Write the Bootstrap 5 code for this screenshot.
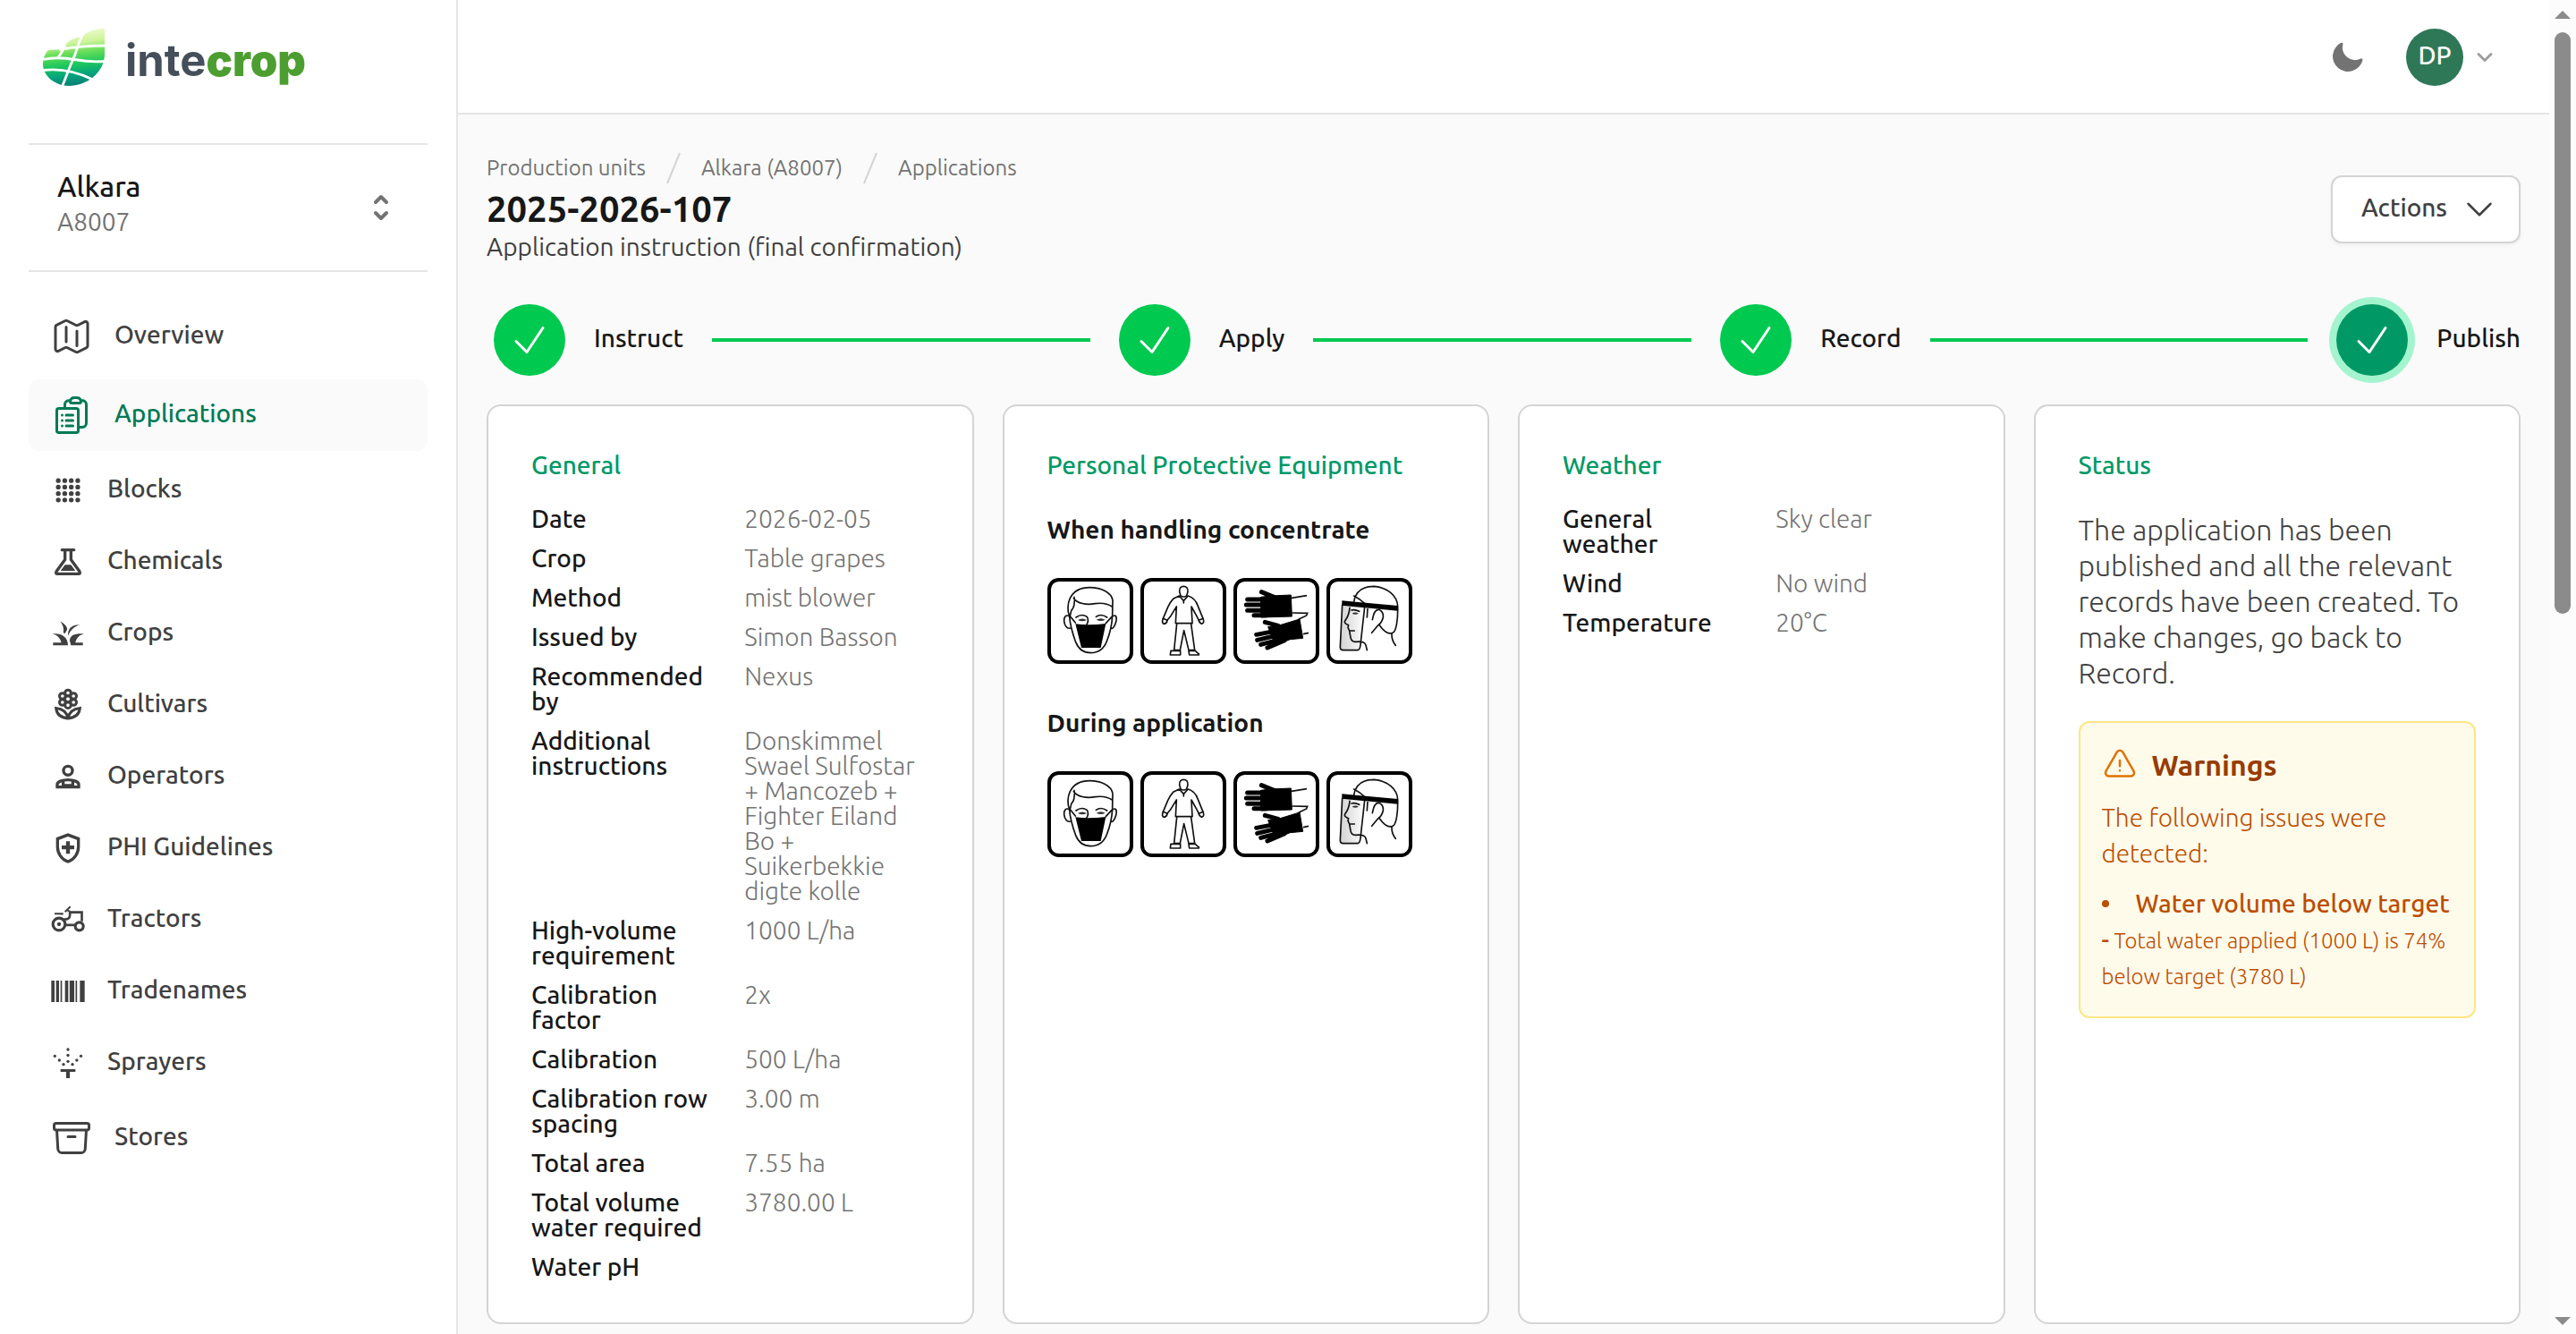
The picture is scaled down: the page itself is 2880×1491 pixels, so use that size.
<!DOCTYPE html>
<html lang="en">
<head>
<meta charset="utf-8">
<meta name="viewport" content="width=device-width, initial-scale=1">
<title>2025-2026-107 · intecrop</title>
<link href="https://cdn.jsdelivr.net/npm/bootstrap@5.3.0/dist/css/bootstrap.min.css" rel="stylesheet">
<style>
  :root { --ink: #171717; --body: #404040; --muted: #737373; --line: #e5e5e5; --edge: #d4d4d4; --green: #009966; --step: #00c950; }
  body { font-family: Ubuntu, "Open Sans", "Noto Sans", sans-serif; font-size: 28px; line-height: 40px; font-weight: 300; color: var(--body); background: #fafafa; }
  a { color: inherit; text-decoration: none; }
  svg { flex: none; display: block; }
  .ico { fill: none; stroke: currentColor; stroke-width: 1.5; stroke-linecap: round; stroke-linejoin: round; }
  .app-shell { height: 100vh; overflow: hidden; }

  .side-panel { flex: 0 0 512px; background: #fff; border-right: 2px solid var(--line); padding: 0 32px; }
  .brand-row { height: 160px; padding: 32px 16px; gap: 22px; }
  .brand-name { font: 700 49px/72px Inter, sans-serif; color: #454f5b; }
  .brand-name b { color: #4b9e2f; }
  .unit-picker { height: 144px; border: 0; border-top: 2px solid var(--line); border-bottom: 2px solid var(--line); background: none; padding: 0 32px; color: var(--muted); text-align: left; }
  .unit-name { font-size: 32px; font-weight: 500; color: var(--ink); line-height: 36px; }
  .unit-code { line-height: 36px; }
  .unit-text { padding-bottom: 8px; gap: 4px; }
  .side-nav { padding-top: 32px; gap: 8px; }
  .side-nav .nav-link { height: 72px; padding: 0 24px; gap: 24px; color: var(--body); font-weight: 500; border-radius: 12px; }
  .side-nav .nav-tall { height: 80px; }
  .side-nav .active { background: #fafafa; color: #007a55; }
  .side-nav span { padding-bottom: 4px; }

  .top-strip { height: 128px; background: #fff; border-bottom: 2px solid var(--line); padding: 2px 60px 0; }
  .plain-btn { border: 0; background: none; padding: 0; }
  .moon-btn { color: var(--muted); margin-right: 46px; }
  .user-btn { gap: 12px; color: #9f9f9f; }
  .user-disc { width: 64px; height: 64px; border-radius: 50%; background: #2e7858; color: #fff; font-weight: 500; font-size: 28px; line-height: 60px; }

  .page-pad { padding: 40px 32px 12px; }
  .head-text { padding-bottom: 8px; }
  .crumbs { font-size: 24px; font-weight: 400; line-height: 40px; color: var(--muted); gap: 16px; }
  .crumbs svg { color: var(--edge); }
  .page-title { font-size: 40px; line-height: 52px; font-weight: 700; color: var(--ink); }
  .page-sub { line-height: 32px; font-weight: 400; }
  .actions-btn { height: 76px; padding: 0 24px 0 32px; gap: 16px; line-height: 40px; background: #fff; border: 2px solid var(--edge); border-radius: 12px; color: var(--body); box-shadow: 0 2px 4px rgba(0,0,0,.05); }
  .actions-btn span { font-weight: 500; padding-bottom: 4px; }

  .stepper { height: 96px; margin: 32px 0 24px; padding-left: 8px; gap: 32px; }
  .step-item { gap: 32px; font-weight: 500; color: var(--ink); }
  .step-item span:last-child { padding-bottom: 4px; }
  .step-disc { width: 80px; height: 80px; border-radius: 50%; background: var(--step); color: #fff; }
  .step-now { background: var(--green); box-shadow: 0 0 0 8px #a4f4cf; }
  .step-bar { height: 4px; background: var(--step); }

  .panel-grid { display: grid; grid-template-columns: repeat(4, minmax(0, 1fr)); gap: 32px; }
  .panel { background: #fff; border: 2px solid var(--edge); border-radius: 16px; padding: 48px; }
  .panel h2 { font-size: 28px; line-height: 36px; font-weight: 500; color: var(--green); margin: 0 0 28px; }
  .facts { display: grid; grid-template-columns: 1fr 1fr; gap: 16px 32px; line-height: 28px; margin: 0; }
  .facts dt { font-weight: 500; color: var(--ink); }
  .facts dd { margin: 0; color: var(--muted); }
  .panel h3 { font-size: 28px; line-height: 44px; font-weight: 600; color: var(--ink); margin: 32px 0; }
  .signs { gap: 8px; margin-bottom: 44px; }
  .status-text { font-size: 32px; line-height: 40px; margin: 34px 0; }
  .warn-box { background: #fffbeb; border: 2px solid #fee685; border-radius: 12px; padding: 24px; color: #bb4d00; }
  .warn-head { font-size: 32px; font-weight: 600; color: #973c00; gap: 16px; margin-bottom: 16px; line-height: 46px; }
  .warn-head svg { color: #e17100; }
  .warn-title { font-weight: 500; gap: 30px; margin-top: 16px; }
  .bullet-dot { width: 8px; height: 8px; border-radius: 50%; background: currentColor; }
  .warn-note { font-size: 24px; }
  .warn-note span { font-size: 28px; font-weight: 500; }

  .scroll-rail { flex: 0 0 30px; background: #fcfcfc; padding: 12px 6px 10px; color: #8b8b8b; }
  .scroll-thumb { width: 18px; height: 650px; margin: 15px 0 auto; border-radius: 9px; background: #8b8b8b; }
</style>
<script src="https://cdn.jsdelivr.net/npm/bootstrap@5.3.0/dist/js/bootstrap.bundle.min.js"></script>
</head>
<body>

<svg width="0" height="0" class="position-absolute" aria-hidden="true">
  <defs>
    <linearGradient id="shieldFill" x1="0" x2="1"><stop offset="0" stop-color="#d2d2d2"/><stop offset="1" stop-color="#ffffff"/></linearGradient>
    <linearGradient id="leafFill" x1=".55" y1="0" x2=".68" y2="1">
      <stop offset="0" stop-color="#f0fad2"/><stop offset=".24" stop-color="#cdf59b"/><stop offset=".4" stop-color="#6cdf5a"/><stop offset=".6" stop-color="#1fc95c"/><stop offset=".78" stop-color="#06a67c"/><stop offset="1" stop-color="#057a74"/>
    </linearGradient>
  </defs>
  <symbol id="check" viewBox="0 0 24 24"><path d="m4.5 12.75 6 6 9-13.5"/></symbol>
  <symbol id="sign-mask" viewBox="0 0 288 288">
    <rect x="6" y="6" width="276" height="276" rx="32" fill="#fff" stroke="#000" stroke-width="12"/>
    <g fill="none" stroke="#111" stroke-width="5" stroke-linejoin="round" stroke-linecap="round">
      <path d="M74 128C66 110 68 85 76 68C90 40 115 32 142 32C180 32 215 48 219 75L218 124M88 68C100 85 130 92 160 86C190 82 205 88 217 96M90 64Q94 95 80 110L76 128"/>
      <path d="M74 128C62 122 55 130 56 145C58 160 66 172 76 168M218 128C230 122 234 130 230 148C226 162 218 172 214 168"/>
      <path d="M74 128C76 160 84 185 95 215C105 240 125 251 145 251C170 251 190 238 200 210C210 185 216 160 218 128M94 150L76 128M196 152L218 128"/>
      <path d="M96 132Q115 118 133 130Q140 142 132 156M163 130Q180 118 200 132"/>
    </g>
    <path d="M102 141Q117 132 132 141Q117 149 102 141ZM164 140Q179 131 194 140Q179 148 164 140Z" fill="#333"/>
    <path d="M94 154Q140 160 196 153L179 234H114Z"/>
  </symbol>
  <symbol id="sign-suit" viewBox="0 0 288 288">
    <rect x="6" y="6" width="276" height="276" rx="32" fill="#fff" stroke="#000" stroke-width="12"/>
    <g fill="none" stroke="#111" stroke-width="5" stroke-linejoin="round" stroke-linecap="round">
      <path d="M131 46C130 34 136 28 145 28S160 34 159 46L155 60Q145 66 135 60Z"/>
      <path d="M130 60L110 70Q100 80 92 98L76 136L90 142L100 130L121 96L118 152H174L171 96L190 130L196 142L210 136L192 92Q184 68 160 60L145 76Z"/>
      <path d="M76 136Q70 152 80 154Q90 152 90 142M210 136Q216 150 206 154Q196 150 196 142M122 154L113 242H133L146 176L162 242H182L170 154"/>
      <path d="M102 244H134V258H100ZM162 244H184Q190 252 196 254V258H164ZM145 76V84"/>
    </g>
  </symbol>
  <symbol id="sign-gloves" viewBox="0 0 288 288">
    <rect x="6" y="6" width="276" height="276" rx="32" fill="#fff" stroke="#000" stroke-width="12"/>
    <path d="M92 64L125 60L193 57L196 129L92 132ZM116 164L150 160L222 138L233 202L190 206L140 226Z" stroke="#000" stroke-width="3" stroke-linejoin="round"/>
    <g fill="none" stroke="#000" stroke-width="15" stroke-linecap="round">
      <path d="M47 72H110M43 90H110M47 109H110M69 125H110M94 47L136 64"/>
      <path d="M77 190L140 178M80 208L140 194M92 223L150 208M114 234L170 210M106 148L150 160"/>
    </g>
    <path d="M195 67L246 59M196 117L248 118L245 126L218 139M234 188L252 184" fill="none" stroke="#111" stroke-width="5"/>
  </symbol>
  <symbol id="sign-visor" viewBox="0 0 288 288">
    <rect x="6" y="6" width="276" height="276" rx="32" fill="#fff" stroke="#000" stroke-width="12"/>
    <path d="M53 90L46 232Q46 242 56 242H104Q112 242 114 225L128 98Z" fill="url(#shieldFill)"/>
    <g fill="none" stroke="#111" stroke-width="5" stroke-linejoin="round" stroke-linecap="round">
      <path d="M53 90L46 232Q46 242 56 242H104Q112 242 114 225L128 98"/>
      <path d="M92 80C98 38 130 28 160 28C205 32 238 60 239 95C240 140 234 180 222 184C205 192 190 176 176 156M92 60Q112 70 128 86"/>
      <path d="M78 100Q76 125 62 144Q58 152 74 158L72 166L77 177H94M77 177L81 200Q84 216 100 214Q128 211 132 225L136 242"/>
      <path d="M154 140Q160 105 175 106Q192 112 190 132Q186 150 172 160L152 184M138 104L136 132M219 186Q218 210 232 226M84 108Q95 104 110 112"/>
    </g>
    <path d="M86 119Q96 112 108 119Q96 125 86 119Z" fill="#333"/>
    <path d="M52 76L239 93V110L52 92Z"/>
  </symbol>
</svg>

<div class="app-shell d-flex">

  <aside class="side-panel">
    <a href="#" class="brand-row d-flex align-items-start">
      <svg width="70" height="64" viewBox="0 0 70 64" role="img" aria-label="Leaf">
        <path fill="url(#leafFill)" d="M69 0C58 0 48 4 43.500 9C34 10 28 14 24 19L22 23L6 24C3 27 0 33 0 40C0 53 14 64 29 64C48 64 69 50 69 28Z"/>
        <g fill="none" stroke="#fff" stroke-width="2.800"><path d="M18 23.500Q42 19 70 19M0 34.500Q16 31 35 34.500T70 36.500M0 46.500Q28 43 56 57M45 5L41 14Q36 30 30 43L21 66M25 18Q21 28 16 33"/></g>
      </svg>
      <span class="brand-name">inte<b>crop</b></span>
    </a>

    <button type="button" class="unit-picker w-100 d-flex align-items-center justify-content-between">
      <span class="unit-text d-flex flex-column"><span class="unit-name">Alkara</span><span class="unit-code">A8007</span></span>
      <svg width="40" height="40" viewBox="0 0 20 20" class="ico"><path stroke-width="2" d="M7 7l3-3 3 3M7 13l3 3 3-3"/></svg>
    </button>

    <nav class="side-nav nav flex-column" aria-label="Main">
      <a href="#" class="nav-link nav-tall d-flex align-items-center"><svg width="48" height="48" viewBox="0 0 24 24" class="ico"><path d="M9 6.75V15m6-6v8.250m.503 3.498 4.875-2.437c.381-.19.622-.58.622-1.006V4.820c0-.836-.88-1.380-1.628-1.006l-3.869 1.934c-.317.159-.69.159-1.006 0L9.503 3.252a1.125 1.125 0 0 0-1.006 0L3.622 5.689C3.240 5.880 3 6.270 3 6.695V19.180c0 .836.88 1.380 1.628 1.006l3.869-1.934c.317-.159.69-.159 1.006 0l4.994 2.497c.317.158.69.158 1.006 0Z"/></svg><span>Overview</span></a>
      <a href="#" class="nav-link nav-tall active d-flex align-items-center" aria-current="page"><svg width="48" height="48" viewBox="0 0 24 24" class="ico"><path d="M9 12h3.750M9 15h3.750M9 18h3.750m3 .75H18a2.250 2.250 0 0 0 2.250-2.250V6.108c0-1.135-.845-2.098-1.976-2.192a48.424 48.424 0 0 0-1.123-.08m-5.801 0c-.065.21-.1.433-.1.664 0 .414.336.75.75.75h4.500a.75.75 0 0 0 .75-.75 2.250 2.250 0 0 0-.1-.664m-5.800 0A2.251 2.251 0 0 1 13.500 2.250H15c1.012 0 1.867.668 2.150 1.586m-5.800 0c-.376.023-.75.05-1.124.08C9.095 4.010 8.250 4.973 8.250 6.108V8.250m0 0H4.875c-.621 0-1.125.504-1.125 1.125v11.250c0 .621.504 1.125 1.125 1.125h9.750c.621 0 1.125-.504 1.125-1.125V9.375c0-.621-.504-1.125-1.125-1.125H8.250ZM6.750 12h.008v.008H6.750V12Zm0 3h.008v.008H6.750V15Zm0 3h.008v.008H6.750V18Z"/></svg><span>Applications</span></a>
      <a href="#" class="nav-link d-flex align-items-center"><svg width="40" height="40" viewBox="0 0 24 24"><g fill="none" stroke="currentColor" stroke-width="3.200" stroke-linecap="round" stroke-dasharray="0 4.350"><path d="M5.500 5.500H19M5.500 9.850H19M5.500 14.200H19M5.500 18.500H19"/></g></svg><span>Blocks</span></a>
      <a href="#" class="nav-link d-flex align-items-center"><svg width="40" height="40" viewBox="0 0 24 24"><path fill="none" stroke="currentColor" stroke-width="2" stroke-linejoin="round" d="M10 4V10.500L4.200 18.500Q3.500 20 5 20H19Q20.500 20 19.800 18.500L14 10.500V4"/><path fill="currentColor" d="M8 3H16Q17 3 17 4T16 5H8Q7 5 7 4T8 3ZM7 18H17L14 14H10Z"/></svg><span>Chemicals</span></a>
      <a href="#" class="nav-link d-flex align-items-center"><svg width="40" height="40" viewBox="0 0 24 24" fill="currentColor"><path d="M1.600 12.200C7 11.500 12 14 12 19.900H2V18.200H7.500C7 15.500 4.800 13 1.600 12.200ZM22.800 12.200C17 11.800 13 13 13.200 17L14 19.900H22V18.200H17C17.500 15.500 19.500 13 22.800 12.200ZM6.800 4C9.500 5 12 8 11.400 9.500L10 12L8.900 11.500C9.300 8 8.500 6 6.800 4ZM20 6.200C15 6 11.800 8.500 12 13.600C14 9.500 16 7.500 20 6.200Z"/></svg><span>Crops</span></a>
      <a href="#" class="nav-link d-flex align-items-center"><svg width="40" height="40" viewBox="0 0 24 24" fill="none" stroke="currentColor" stroke-width="1.800"><circle cx="12" cy="8" r="2.100"/><circle cx="12" cy="3.900" r="2"/><circle cx="12" cy="12.100" r="2"/><circle cx="8.300" cy="6" r="2"/><circle cx="15.700" cy="6" r="2"/><circle cx="8.300" cy="10.200" r="2"/><circle cx="15.700" cy="10.200" r="2"/><path d="M4 14.100C8.500 14.600 11.300 17 12 20.900C7.500 20.500 4.400 18.500 4 14.100ZM20 14.100C15.500 14.600 12.700 17 12 20.900C16.500 20.500 19.600 18.500 20 14.100Z"/></svg><span>Cultivars</span></a>
      <a href="#" class="nav-link d-flex align-items-center"><svg width="40" height="40" viewBox="0 0 24 24" fill="none" stroke="currentColor" stroke-width="2"><circle cx="12" cy="8" r="3"/><path d="M4.800 19V17.200C4.800 15.500 8 14.200 12 14.200S19.200 15.500 19.200 17.200V19Z"/><path d="M8.800 14.500V19M15.200 14.500V19M8 18H16"/></svg><span>Operators</span></a>
      <a href="#" class="nav-link d-flex align-items-center"><svg width="40" height="40" viewBox="0 0 24 24" fill="currentColor"><path d="M12 22q-3.475-.875-5.738-3.988T4 11.100V5l8-3 8 3v6.100q0 3.800-2.263 6.912T12 22Zm0-2.100q2.600-.825 4.300-3.300t1.700-5.500V6.375l-6-2.250-6 2.250V11.100q0 3.025 1.700 5.500t4.300 3.300ZM10.700 7.300h2.600v2.900h2.900v2.600h-2.900v2.900h-2.600v-2.900H7.800v-2.600h2.900z" fill-rule="evenodd"/></svg><span>PHI Guidelines</span></a>
      <a href="#" class="nav-link d-flex align-items-center"><svg width="40" height="40" viewBox="0 0 24 24" fill="none" stroke="currentColor" stroke-width="1.900"><circle cx="6" cy="15" r="4.100"/><circle cx="6" cy="15" r="1.300" fill="currentColor" stroke="none"/><circle cx="19.600" cy="16.400" r="2.700"/><path d="M9 11.800Q13.300 12 13.300 9V7H21.300V13M10.500 15.500H16.800" stroke-width="1.600"/><path d="M3 7.900H8.800L7 8.200M10 6.700L13.600 3.200M11.600 5.200L13.600 7" stroke-width="1.200"/></svg><span>Tractors</span></a>
      <a href="#" class="nav-link d-flex align-items-center"><svg width="40" height="40" viewBox="0 0 24 24" fill="currentColor"><path d="M.8 4.800H3V19.200H.8ZM4 4.800H6V19.200H4ZM7 4.800H8V19.200H7ZM10 4.800H12.200V19.200H10ZM13.100 4.800H16.200V19.200H13.100ZM17.100 4.800H18.100V19.200H17.100ZM20 4.800H23.200V19.200H20Z"/></svg><span>Tradenames</span></a>
      <a href="#" class="nav-link d-flex align-items-center"><svg width="40" height="40" viewBox="0 0 24 24" fill="currentColor"><path d="M7 16.200H17V18H13.200V22.200H10.800V18H7Z"/><g><circle cx="12" cy="3" r="1"/><circle cx="12" cy="6.900" r="1"/><circle cx="12" cy="11" r="1"/><circle cx="3.200" cy="7.400" r="1"/><circle cx="6.200" cy="10.200" r="1"/><circle cx="9" cy="13" r="1"/><circle cx="20.700" cy="7.400" r="1"/><circle cx="17.900" cy="10.200" r="1"/><circle cx="15" cy="13" r="1"/></g></svg><span>Sprayers</span></a>
      <a href="#" class="nav-link nav-tall d-flex align-items-center"><svg width="48" height="48" viewBox="0 0 24 24" class="ico"><path d="m20.250 7.500-.625 10.632a2.250 2.250 0 0 1-2.247 2.118H6.622a2.250 2.250 0 0 1-2.247-2.118L3.750 7.500M10 11.250h4M3.375 7.500h17.250c.621 0 1.125-.504 1.125-1.125v-1.500c0-.621-.504-1.125-1.125-1.125H3.375c-.621 0-1.125.504-1.125 1.125v1.500c0 .621.504 1.125 1.125 1.125Z"/></svg><span>Stores</span></a>
    </nav>
  </aside>

  <div class="flex-fill overflow-hidden">
    <header class="top-strip d-flex align-items-center justify-content-end">
      <button type="button" class="plain-btn moon-btn" aria-label="Dark mode"><svg width="40" height="40" viewBox="0 0 20 20" fill="currentColor"><path fill-rule="evenodd" clip-rule="evenodd" d="M7.455 2.004a.75.75 0 0 1 .26.77 7 7 0 0 0 9.958 7.967.75.75 0 0 1 1.067.853A8.500 8.500 0 1 1 6.647 1.921a.75.75 0 0 1 .808.083Z"/></svg></button>
      <button type="button" class="plain-btn user-btn d-flex align-items-center"><span class="user-disc text-center">DP</span><svg width="24" height="24" viewBox="0 0 24 24" class="ico"><path stroke-width="3" d="m5 8.500 7 7 7-7"/></svg></button>
    </header>

    <main class="page-pad">
      <div class="d-flex align-items-center justify-content-between">
        <div class="head-text">
          <nav aria-label="Breadcrumb"><ol class="crumbs d-flex align-items-center list-unstyled mb-0">
            <li><a href="#">Production units</a></li>
            <li aria-hidden="true"><svg width="30" height="40" viewBox="0 0 30 40"><path d="M22 3L8 37" stroke="currentColor" stroke-width="2"/></svg></li>
            <li><a href="#">Alkara (A8007)</a></li>
            <li aria-hidden="true"><svg width="30" height="40" viewBox="0 0 30 40"><path d="M22 3L8 37" stroke="currentColor" stroke-width="2"/></svg></li>
            <li><a href="#">Applications</a></li>
          </ol></nav>
          <h1 class="page-title mb-0">2025-2026-107</h1>
          <p class="page-sub mb-0">Application instruction (final confirmation)</p>
        </div>
        <button type="button" class="actions-btn d-flex align-items-center"><span>Actions</span><svg width="40" height="40" viewBox="0 0 24 24" class="ico"><path d="m19.500 8.250-7.500 7.500-7.500-7.500"/></svg></button>
      </div>

      <div class="stepper d-flex align-items-center">
        <div class="step-item d-flex align-items-center"><span class="step-disc d-flex align-items-center justify-content-center"><svg width="48" height="48" class="ico"><use href="#check"/></svg></span><span>Instruct</span></div>
        <div class="step-bar flex-fill"></div>
        <div class="step-item d-flex align-items-center"><span class="step-disc d-flex align-items-center justify-content-center"><svg width="48" height="48" class="ico"><use href="#check"/></svg></span><span>Apply</span></div>
        <div class="step-bar flex-fill"></div>
        <div class="step-item d-flex align-items-center"><span class="step-disc d-flex align-items-center justify-content-center"><svg width="48" height="48" class="ico"><use href="#check"/></svg></span><span>Record</span></div>
        <div class="step-bar flex-fill"></div>
        <div class="step-item d-flex align-items-center"><span class="step-disc step-now d-flex align-items-center justify-content-center"><svg width="48" height="48" class="ico"><use href="#check"/></svg></span><span>Publish</span></div>
      </div>

      <div class="panel-grid">
        <section class="panel">
          <h2>General</h2>
          <dl class="facts">
            <dt>Date</dt><dd>2026-02-05</dd>
            <dt>Crop</dt><dd>Table grapes</dd>
            <dt>Method</dt><dd>mist blower</dd>
            <dt>Issued by</dt><dd>Simon Basson</dd>
            <dt>Recommended by</dt><dd>Nexus</dd>
            <dt>Additional instructions</dt><dd>Donskimmel Swael Sulfostar + Mancozeb + Fighter Eiland Bo + Suikerbekkie digte kolle</dd>
            <dt>High-volume requirement</dt><dd>1000 L/ha</dd>
            <dt>Calibration factor</dt><dd>2x</dd>
            <dt>Calibration</dt><dd>500 L/ha</dd>
            <dt>Calibration row spacing</dt><dd>3.00 m</dd>
            <dt>Total area</dt><dd>7.55 ha</dd>
            <dt>Total volume water required</dt><dd>3780.00 L</dd>
            <dt>Water pH</dt><dd></dd>
          </dl>
        </section>

        <section class="panel">
          <h2>Personal Protective Equipment</h2>
          <h3>When handling concentrate</h3>
          <div class="signs d-flex">
            <svg width="96" height="96" role="img" aria-label="Mask"><use href="#sign-mask"/></svg>
            <svg width="96" height="96" role="img" aria-label="Coverall"><use href="#sign-suit"/></svg>
            <svg width="96" height="96" role="img" aria-label="Gloves"><use href="#sign-gloves"/></svg>
            <svg width="96" height="96" role="img" aria-label="Face shield"><use href="#sign-visor"/></svg>
          </div>
          <h3>During application</h3>
          <div class="signs d-flex">
            <svg width="96" height="96" role="img" aria-label="Mask"><use href="#sign-mask"/></svg>
            <svg width="96" height="96" role="img" aria-label="Coverall"><use href="#sign-suit"/></svg>
            <svg width="96" height="96" role="img" aria-label="Gloves"><use href="#sign-gloves"/></svg>
            <svg width="96" height="96" role="img" aria-label="Face shield"><use href="#sign-visor"/></svg>
          </div>
        </section>

        <section class="panel">
          <h2>Weather</h2>
          <dl class="facts">
            <dt>General weather</dt><dd>Sky clear</dd>
            <dt>Wind</dt><dd>No wind</dd>
            <dt>Temperature</dt><dd>20°C</dd>
          </dl>
        </section>

        <section class="panel">
          <h2>Status</h2>
          <p class="status-text">The application has been published and all the relevant records have been created. To make changes, go back to Record.</p>
          <div class="warn-box">
            <div class="warn-head d-flex align-items-center"><svg width="40" height="40" viewBox="0 0 24 24" class="ico"><path d="M12 9v3.750m-9.303 3.376c-.866 1.500.217 3.374 1.948 3.374h14.710c1.730 0 2.813-1.874 1.948-3.374L13.949 3.378c-.866-1.500-3.032-1.500-3.898 0L2.697 16.126ZM12 15.750h.007v.008H12v-.008Z"/></svg><span>Warnings</span></div>
            <div>The following issues were detected:</div>
            <div class="warn-title d-flex align-items-center"><i class="bullet-dot"></i><span>Water volume below target</span></div>
            <div class="warn-note"><span>-</span> Total water applied (1000 L) is 74% below target (3780 L)</div>
          </div>
        </section>
      </div>
    </main>
  </div>

  <div class="scroll-rail d-flex flex-column" aria-hidden="true">
    <svg width="18" height="9" viewBox="0 0 18 9"><path d="M9 0L18 9H0Z" fill="currentColor"/></svg>
    <div class="scroll-thumb"></div>
    <svg width="18" height="9" viewBox="0 0 18 9"><path d="M0 0H18L9 9Z" fill="currentColor"/></svg>
  </div>
</div>
</body>
</html>
